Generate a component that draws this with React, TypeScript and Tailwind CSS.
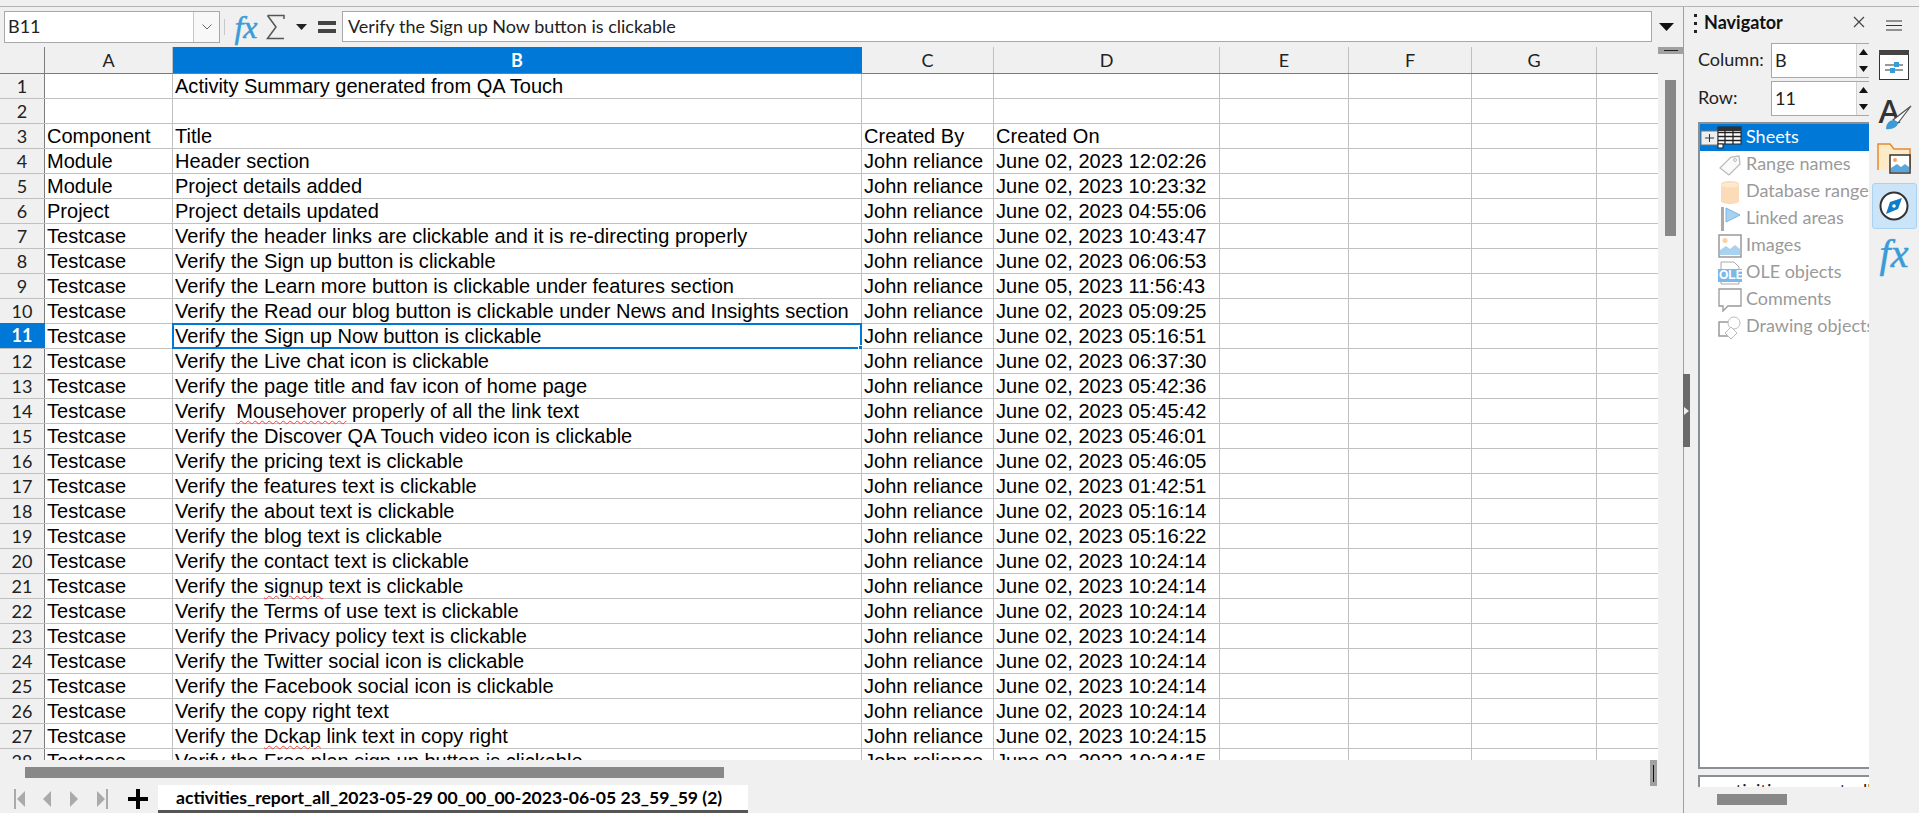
import React from "react";

const rows: [string, string, string, string][] = [
  ["", "Activity Summary generated from QA Touch", "", ""],
  ["", "", "", ""],
  ["Component", "Title", "Created By", "Created On"],
  ["Module", "Header section", "John reliance", "June 02, 2023 12:02:26"],
  ["Module", "Project details added", "John reliance", "June 02, 2023 10:23:32"],
  ["Project", "Project details updated", "John reliance", "June 02, 2023 04:55:06"],
  ["Testcase", "Verify the header links are clickable and it is re-directing properly", "John reliance", "June 02, 2023 10:43:47"],
  ["Testcase", "Verify the Sign up button is clickable", "John reliance", "June 02, 2023 06:06:53"],
  ["Testcase", "Verify the Learn more button is clickable under features section", "John reliance", "June 05, 2023 11:56:43"],
  ["Testcase", "Verify the Read our blog button is clickable under News and Insights section", "John reliance", "June 02, 2023 05:09:25"],
  ["Testcase", "Verify the Sign up Now button is clickable", "John reliance", "June 02, 2023 05:16:51"],
  ["Testcase", "Verify the Live chat icon is clickable", "John reliance", "June 02, 2023 06:37:30"],
  ["Testcase", "Verify the page title and fav icon of home page", "John reliance", "June 02, 2023 05:42:36"],
  ["Testcase", "Verify  |Mousehover| properly of all the link text", "John reliance", "June 02, 2023 05:45:42"],
  ["Testcase", "Verify the Discover QA Touch video icon is clickable", "John reliance", "June 02, 2023 05:46:01"],
  ["Testcase", "Verify the pricing text is clickable", "John reliance", "June 02, 2023 05:46:05"],
  ["Testcase", "Verify the features text is clickable", "John reliance", "June 02, 2023 01:42:51"],
  ["Testcase", "Verify the about text is clickable", "John reliance", "June 02, 2023 05:16:14"],
  ["Testcase", "Verify the blog text is clickable", "John reliance", "June 02, 2023 05:16:22"],
  ["Testcase", "Verify the contact text is clickable", "John reliance", "June 02, 2023 10:24:14"],
  ["Testcase", "Verify the |signup| text is clickable", "John reliance", "June 02, 2023 10:24:14"],
  ["Testcase", "Verify the Terms of use text is clickable", "John reliance", "June 02, 2023 10:24:14"],
  ["Testcase", "Verify the Privacy policy text is clickable", "John reliance", "June 02, 2023 10:24:14"],
  ["Testcase", "Verify the Twitter social icon is clickable", "John reliance", "June 02, 2023 10:24:14"],
  ["Testcase", "Verify the Facebook social icon is clickable", "John reliance", "June 02, 2023 10:24:14"],
  ["Testcase", "Verify the copy right text", "John reliance", "June 02, 2023 10:24:14"],
  ["Testcase", "Verify the |Dckap| link text in copy right", "John reliance", "June 02, 2023 10:24:15"],
  ["Testcase", "Verify the Free plan sign up button is clickable", "John reliance", "June 02, 2023 10:24:15"],
];

function Spell({ text }: { text: string }) {
  const parts = text.split("|");
  return (
    <>
      {parts.map((p, i) =>
        i % 2 === 1 ? (
          <span key={i} className="underline decoration-wavy decoration-[#f04040] decoration-1 underline-offset-2">
            {p}
          </span>
        ) : (
          <span key={i}>{p}</span>
        )
      )}
    </>
  );
}

const cellCls =
  "shrink-0 h-full border-r border-[#c0c0c0] pl-[2px] overflow-visible whitespace-pre leading-[24px]";

function Row({ n, r }: { n: number; r: [string, string, string, string] }) {
  const sel = n === 11;
  return (
    <div className="flex h-[25px] shrink-0 border-b border-[#c0c0c0] bg-white text-[20.05px] text-black font-['Liberation_Sans',sans-serif]">
      <div
        className={
          sel
            ? "relative w-[45px] shrink-0 h-[25px] -mt-px bg-[#0078d7] text-white font-bold text-center leading-[25px] text-[18px] font-['Lato',sans-serif] border-r border-[#0078d7]"
            : "w-[45px] shrink-0 h-full bg-[#f0f0f0] text-[#222] text-center leading-[24px] text-[18px] font-['Lato',sans-serif] border-r border-[#7c7c7c]"
        }
      >
        {n}
      </div>
      <div className={`${cellCls} w-[128px]`}>{r[0]}</div>
      <div className={`${cellCls} w-[689px] relative`}>
        <Spell text={r[1]} />
        {sel && (
          <div className="absolute -left-px -top-px w-[690px] h-[26px] border-2 border-[#0078d7]">
            <div className="absolute -right-[3px] -bottom-[3px] w-[5px] h-[5px] bg-[#0078d7] border border-white" />
          </div>
        )}
      </div>
      <div className={`${cellCls} w-[132px]`}>{r[2]}</div>
      <div className={`${cellCls} w-[226px]`}>{r[3]}</div>
      <div className={`${cellCls} w-[129px]`} />
      <div className={`${cellCls} w-[123px]`} />
      <div className={`${cellCls} w-[125px]`} />
      <div className="flex-1" />
    </div>
  );
}

function HeaderCell({ label, w, sel }: { label: string; w: string; sel?: boolean }) {
  return (
    <div
      className={`${w} shrink-0 h-full flex items-center justify-center text-[18px] font-['Lato',sans-serif] border-r ${
        sel ? "bg-[#0078d7] text-white font-bold border-[#0078d7]" : "text-[#222] border-[#c0c0c0]"
      }`}
    >
      {label}
    </div>
  );
}

const FxIcon = ({ size }: { size: number }) => (
  <span
    className="font-['Liberation_Serif',serif] italic text-[#3a9bd8] leading-none [-webkit-text-stroke:0.5px_#3a9bd8]"
    style={{ fontSize: size }}
  >
    fx
  </span>
);

function TreeRow({ icon, label, active }: { icon: React.ReactNode; label: string; active?: boolean }) {
  return (
    <div
      className={`flex items-center h-[27px] pl-[18px] shrink-0 whitespace-nowrap text-[18px] ${
        active ? "bg-[#0078d7] text-white" : "text-[#9a9a9a]"
      }`}
    >
      <span className="w-[24px] h-[24px] shrink-0 mr-[4px] flex items-center justify-center">{icon}</span>
      <span className="-mt-[2px]">{label}</span>
    </div>
  );
}

const Spin = () => (
  <div className="w-[13px] shrink-0 h-full flex flex-col bg-[#f0f0f0] border-l border-[#d0d0d0]">
    <div className="flex-1 flex items-center justify-center">
      <svg width="9" height="6" viewBox="0 0 9 6"><path d="M4.5 0L9 6H0z" fill="#111" /></svg>
    </div>
    <div className="flex-1 flex items-center justify-center">
      <svg width="9" height="6" viewBox="0 0 9 6"><path d="M4.5 6L9 0H0z" fill="#111" /></svg>
    </div>
  </div>
);

export default function App() {
  return (
    <div className="w-[1919px] h-[813px] overflow-hidden bg-[#f0f0f0] flex flex-col font-['Lato',sans-serif]">
      <div className="h-[7px] shrink-0 border-b border-[#b4b4b4]" />
      <div className="flex flex-1 min-h-0">
        {/* main column */}
        <div className="w-[1683px] shrink-0 flex flex-col min-h-0">
          {/* formula bar */}
          <div className="h-[40px] shrink-0 flex items-center pl-[4px] pb-[1px]">
            <div className="w-[216px] h-[32px] flex border border-[#a8a8a8] bg-white text-[18px] text-[#222]">
              <div className="flex-1 pl-[3px] leading-[29px]">B11</div>
              <div className="w-[26px] h-full border-l border-[#c8c8c8] bg-[#f8f8f8] flex items-center justify-center">
                <svg width="12" height="8" viewBox="0 0 12 8"><path d="M1.5 1.5L6 6l4.5-4.5" fill="none" stroke="#666" strokeWidth="1" /></svg>
              </div>
            </div>
            <div className="w-px h-[16px] bg-[#c8c8c8] ml-[4px]" />
            <div className="w-[30px] flex items-center justify-center ml-[6px]">
              <FxIcon size={32} />
            </div>
            <svg width="20" height="26" viewBox="0 0 20 26" className="ml-[5px]">
              <path d="M1.5 1.5H18V5M18 24.5H1.5L10 13 1.5 1.5" fill="none" stroke="#555" strokeWidth="1.5" />
            </svg>
            <svg width="11" height="6" viewBox="0 0 11 6" className="ml-[10px]"><path d="M0 0h11L5.5 6z" fill="#222" /></svg>
            <svg width="20" height="14" viewBox="0 0 20 14" className="ml-[11px]">
              <rect x="0" y="1" width="18" height="4" fill="#444" />
              <rect x="0" y="9" width="18" height="4" fill="#444" />
            </svg>
            <div className="ml-[4px] w-[1310px] h-[31px] border border-[#a8a8a8] bg-white pl-[5px] leading-[29px] text-[18px] text-[#222] whitespace-nowrap">
              Verify the Sign up Now button is clickable
            </div>
            <svg width="15" height="8" viewBox="0 0 15 8" className="ml-[7px]"><path d="M0 0h15L7.5 8z" fill="#111" /></svg>
          </div>

          {/* sheet */}
          <div className="flex-1 min-h-0 flex">
            <div className="w-[1658px] shrink-0 flex flex-col overflow-hidden bg-white">
              <div className="flex h-[27px] shrink-0 bg-[#f0f0f0] border-b border-[#7c7c7c]">
                <div className="w-[45px] shrink-0 h-full border-r border-[#7c7c7c]" />
                <HeaderCell label="A" w="w-[128px]" />
                <HeaderCell label="B" w="w-[689px]" sel />
                <HeaderCell label="C" w="w-[132px]" />
                <HeaderCell label="D" w="w-[226px]" />
                <HeaderCell label="E" w="w-[129px]" />
                <HeaderCell label="F" w="w-[123px]" />
                <HeaderCell label="G" w="w-[125px]" />
                <div className="flex-1" />
              </div>
              {rows.map((r, i) => (
                <Row key={i} n={i + 1} r={r} />
              ))}
            </div>
            <div className="flex-1 flex flex-col">
              <div className="h-[7px] shrink-0 bg-[#a0a0a0] flex items-center justify-center">
                <div className="w-[14px] h-px bg-[#222]" />
              </div>
              <div className="ml-[7px] mt-[26px] w-[11px] h-[156px] bg-[#888888]" />
            </div>
          </div>

          {/* horizontal scrollbar */}
          <div className="h-[25px] shrink-0 flex items-center relative">
            <div className="ml-[25px] w-[699px] h-[11px] bg-[#888888]" />
            <div className="absolute left-[1650px] top-0 w-[7px] h-[26px] bg-[#a0a0a0] flex items-center justify-center">
              <div className="w-px h-[17px] bg-[#111]" />
            </div>
          </div>

          {/* tab bar */}
          <div className="h-[28px] shrink-0 flex">
            <div className="w-[158px] shrink-0 relative flex items-center">
              <svg width="12" height="24" viewBox="0 0 12 24" className="ml-[14px]"><path d="M1 2v20" stroke="#aaa" strokeWidth="2" /><path d="M11 4v16L3 12z" fill="#aaa" /></svg>
              <svg width="10" height="24" viewBox="0 0 10 24" className="ml-[16px]"><path d="M9 4v16L1 12z" fill="#aaa" /></svg>
              <svg width="10" height="24" viewBox="0 0 10 24" className="ml-[17px]"><path d="M1 4v16l8-8z" fill="#aaa" /></svg>
              <svg width="12" height="24" viewBox="0 0 12 24" className="ml-[17px]"><path d="M11 2v20" stroke="#aaa" strokeWidth="2" /><path d="M1 4v16l8-8z" fill="#aaa" /></svg>
              <svg width="20" height="20" viewBox="0 0 20 20" className="ml-[20px]"><path d="M8 0h4v8h8v4h-8v8H8v-8H0V8h8z" fill="#000" /></svg>
            </div>
            <div className="w-[590px] shrink-0 h-full bg-white border-b-[3px] border-[#555] pl-[18px] text-[17.6px] font-bold text-black whitespace-nowrap leading-[26px]">
              activities_report_all_2023-05-29 00_00_00-2023-06-05 23_59_59 (2)
            </div>
          </div>
        </div>

        {/* navigator */}
        <div className="w-[186px] shrink-0 border-l border-[#a0a0a0] flex flex-col relative">
          <div className="absolute -left-px top-[367px] w-[7px] h-[73px] bg-[#6a6a6a] flex items-center justify-center">
            <svg width="5" height="8" viewBox="0 0 5 8"><path d="M0 0l5 4-5 4z" fill="#eee" /></svg>
          </div>
          <div className="h-[32px] mb-[4px] shrink-0 flex items-center pl-[10px] relative">
            <div className="flex flex-col gap-[5px] w-[3px] mr-[7px]">
              <div className="w-[3px] h-[3px] bg-[#222]" />
              <div className="w-[3px] h-[3px] bg-[#222]" />
              <div className="w-[3px] h-[3px] bg-[#222]" />
            </div>
            <span className="text-[18px] font-bold text-[#111] -mt-[2px]">Navigator</span>
            <svg width="12" height="12" viewBox="0 0 12 12" className="absolute left-[169px] top-[9px]">
              <path d="M1 1l10 10M11 1L1 11" stroke="#444" strokeWidth="1.2" />
            </svg>
          </div>
          <div className="flex items-center h-[35px] shrink-0 pl-[14px] text-[18px] text-[#222]">
            <span className="w-[73px] -mt-[2px]">Column:</span>
            <div className="w-[98px] h-[35px] flex border border-[#a8a8a8] border-r-0 bg-white pl-[3px] leading-[33px]">
              <span className="flex-1">B</span>
              <Spin />
            </div>
          </div>
          <div className="flex items-center h-[35px] mt-[3px] shrink-0 pl-[14px] text-[18px] text-[#222]">
            <span className="w-[73px] -mt-[2px]">Row:</span>
            <div className="w-[98px] h-[35px] flex border border-[#a8a8a8] border-r-0 bg-white pl-[3px] leading-[33px]">
              <span className="flex-1">11</span>
              <Spin />
            </div>
          </div>
          <div className="ml-[14px] mt-[6px] w-[171px] h-[647px] shrink-0 border-2 border-r-0 border-[#8a8f95] bg-white flex flex-col overflow-hidden">
            <TreeRow
              active
              label="Sheets"
              icon={
                <svg width="42" height="24" viewBox="0 0 42 24" className="shrink-0 -ml-[18px]">
                  <rect x="1" y="5" width="17" height="14" fill="#eee" stroke="#777" />
                  <path d="M5 12h9M9.500 8v8" stroke="#234" />
                  <rect x="18" y="1" width="23" height="17" fill="#fff" stroke="#222" />
                  <path d="M18 6.500h23M18 10.500h23M18 14.500h23M25 1v17M33 1v17" stroke="#222" strokeWidth="1.300" />
                  <rect x="18" y="1" width="23" height="4" fill="#333" />
                  <rect x="18" y="18" width="5" height="4" fill="#fff" stroke="#222" />
                </svg>
              }
            />
            <TreeRow
              label="Range names"
              icon={
                <svg width="24" height="24" viewBox="0 0 24 24">
                  <path d="M2 15l11-11 8-1 1 8-11 11z" fill="#fafafa" stroke="#bbb" strokeWidth="1.300" />
                  <circle cx="17" cy="7" r="1.500" fill="none" stroke="#bbb" />
                </svg>
              }
            />
            <TreeRow
              label="Database ranges"
              icon={
                <svg width="24" height="24" viewBox="0 0 24 24">
                  <path d="M3 4c0-4 18-4 18 0v17c0 4-18 4-18 0z" fill="#fcdcb8" />
                  <ellipse cx="12" cy="5" rx="9" ry="2.500" fill="#fde8d0" />
                </svg>
              }
            />
            <TreeRow
              label="Linked areas"
              icon={
                <svg width="24" height="24" viewBox="0 0 24 24">
                  <rect x="3" y="0" width="3" height="24" fill="#aaa" />
                  <path d="M8 1l14 7-14 7z" fill="#a9d2f0" stroke="#7bb5e2" />
                </svg>
              }
            />
            <TreeRow
              label="Images"
              icon={
                <svg width="24" height="24" viewBox="0 0 24 24">
                  <rect x="1" y="1" width="22" height="22" fill="#fff" stroke="#999" strokeWidth="1.500" />
                  <circle cx="7" cy="6.500" r="2.500" fill="#fcd0a0" />
                  <path d="M2 21v-5l6-4 4 3 5-4 5 4v6z" fill="#a9d2f0" />
                </svg>
              }
            />
            <TreeRow
              label="OLE objects"
              icon={
                <span className="relative w-[24px] h-[24px] block">
                  <svg width="24" height="24" viewBox="0 0 24 24" className="absolute left-0 top-0">
                    <path d="M3 23V1h13l5 5v17z" fill="#fff" stroke="#aaa" />
                    <rect x="0" y="8" width="24" height="13" fill="#7db9e8" />
                  </svg>
                  <span className="absolute left-[1px] top-[7px] text-[12px] leading-[15px] font-bold text-white font-['Liberation_Sans',sans-serif]">OLE</span>
                </span>
              }
            />
            <TreeRow
              label="Comments"
              icon={
                <svg width="24" height="24" viewBox="0 0 24 24">
                  <path d="M1 1h22v17H10l-5 5v-5H1z" fill="#fff" stroke="#999" strokeWidth="1.300" />
                </svg>
              }
            />
            <TreeRow
              label="Drawing objects"
              icon={
                <svg width="24" height="24" viewBox="0 0 24 24">
                  <rect x="1" y="7" width="13" height="14" fill="#fff" stroke="#999" strokeWidth="1.500" />
                  <circle cx="16" cy="8" r="6" fill="#fff" stroke="#bbb" />
                  <path d="M13 12l6 6-6 6-6-6z" fill="#fff" stroke="#bbb" />
                </svg>
              }
            />
          </div>
          <div className="ml-[14px] mt-[6px] w-[171px] h-[12px] shrink-0 border-t-2 border-l-2 border-[#8a8f95] bg-white overflow-hidden pl-[18px] pt-[3px] text-[18px] leading-[20px] text-[#222] whitespace-nowrap">
            activities_report_all_2023
          </div>
          <div className="flex-1 bg-[#f0f0f0] pl-[33px] pt-[7px]">
            <div className="w-[70px] h-[11px] bg-[#888888]" />
          </div>
        </div>

        {/* deck */}
        <div className="flex-1 flex flex-col items-center relative">
          <svg width="16" height="11" viewBox="0 0 16 11" className="mt-[13px] shrink-0">
            <path d="M0 1h16M0 5.500h16M0 10h16" stroke="#333" strokeWidth="1.200" />
          </svg>
          <svg width="30" height="30" viewBox="0 0 30 30" className="mt-[19px] shrink-0">
            <rect x="0.500" y="0.500" width="29" height="29" fill="#fff" stroke="#333" />
            <rect x="0" y="0" width="30" height="5" fill="#444" />
            <path d="M6 15h18M6 20h18" stroke="#333" />
            <rect x="15" y="12" width="5" height="5" fill="#3a9bd8" />
            <rect x="11" y="18" width="5" height="5" fill="#3a9bd8" />
          </svg>
          <span className="relative w-[34px] h-[34px] mt-[17px] ml-[3px] block shrink-0">
            <span className="absolute left-0 -top-[5px] font-['Noto_Sans',sans-serif] font-medium text-[33px] leading-[38px] text-[#333]">A</span>
            <svg width="34" height="34" viewBox="0 0 34 34" className="absolute left-0 top-0">
              <path d="M32 9L19 26l-5-3z" fill="#fff" stroke="#555" strokeWidth="1.200" />
              <path d="M7 32c0-5 3-9 8-9l4 3c0 4-7 7-12 6z" fill="#3a9bd8" />
            </svg>
          </span>
          <svg width="34" height="32" viewBox="0 0 34 32" className="mt-[12px] shrink-0">
            <path d="M1 27V1h12l4 5h16v20" fill="#fdebc8" stroke="#e8892c" strokeWidth="1.500" />
            <rect x="13" y="12" width="20" height="18" fill="#fff" stroke="#333" strokeWidth="1.500" />
            <circle cx="18" cy="17" r="2" fill="#f4a460" />
            <path d="M14 29v-4l6-4 4 3 4-3 4 3v5z" fill="#5aa7dd" />
          </svg>
          <div className="mt-[8px] w-[45px] h-[46px] shrink-0 rounded-[3px] bg-[#cce4f7] border border-[#a8d2f2] flex items-center justify-center">
            <svg width="30" height="30" viewBox="0 0 30 30">
              <circle cx="15" cy="15" r="13.500" fill="#fff" stroke="#333" strokeWidth="2" />
              <path d="M23 7l-4 11-12 5 4-12z" fill="#0f7dc8" />
              <circle cx="15" cy="15" r="1.800" fill="#fff" />
            </svg>
          </div>
          <div className="mt-[5px]">
            <FxIcon size={40} />
          </div>
        </div>
      </div>
    </div>
  );
}
